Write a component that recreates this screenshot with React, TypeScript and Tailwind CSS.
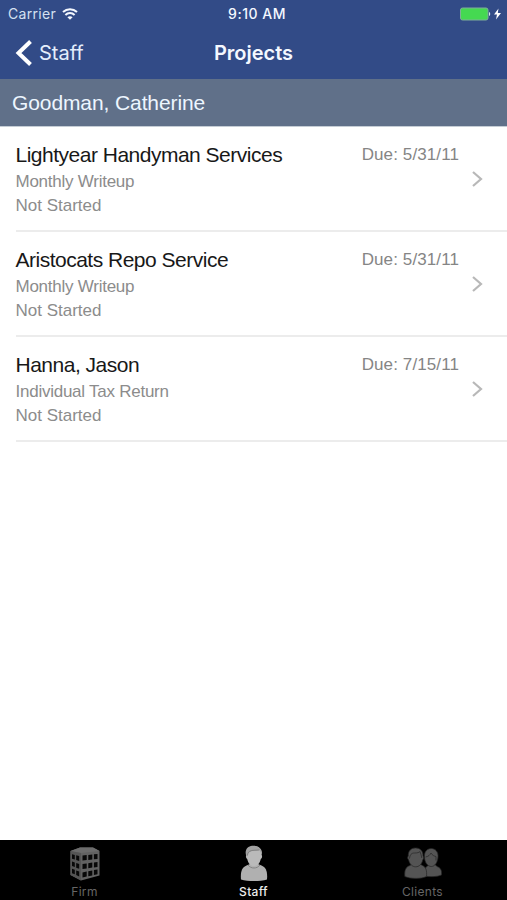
const projects = [
  { client: "Lightyear Handyman Services", task: "Monthly Writeup", status: "Not Started", due: "5/31/11" },
  { client: "Aristocats Repo Service", task: "Monthly Writeup", status: "Not Started", due: "5/31/11" },
  { client: "Hanna, Jason", task: "Individual Tax Return", status: "Not Started", due: "7/15/11" },
];

function WifiIcon() {
  return (
    <svg width="16" height="12" viewBox="0 0 16 12" fill="none" stroke="#f4f8ff" strokeWidth="2">
      <path d="M1 4C5 .2 11 .2 15 4" />
      <path d="M3.400 7c2.600-2.600 6.600-2.600 9.200 0" />
      <path d="M8 11.800 5.400 9.200c1.500-1.400 3.700-1.400 5.200 0z" fill="#f4f8ff" stroke="none" />
    </svg>
  );
}

function BatteryIcon() {
  return (
    <svg width="42" height="14" viewBox="0 0 42 14">
      <rect x="0.500" y="1" width="27.500" height="12" rx="2" fill="#45d951" stroke="#7fae9b" strokeWidth="1" />
      <path d="M29 5c1.600.4 1.600 3.600 0 4z" fill="#dbe8f0" />
      <path d="M38.500 1.500 34 7.500h3L36 12.500l5-6.500h-3.200z" fill="#fff" />
    </svg>
  );
}

function FirmIcon() {
  return (
    <svg width="32" height="36" viewBox="0 0 32 36">
      <path d="M1.500 5 11 1.500h13L30.500 5v24.500L12 34.500 1.500 29z" fill="#626262" />
      <path d="M1.500 5 11 1.500h13L30.500 5 12 7z" fill="#6c6c6c" />
      <path d="M1.500 5 12 7v27.500L1.500 29z" fill="#555" />
      <g fill="#080808">
        <path d="m13.500 9.600 4.200-.5v5l-4.200.5zM19.300 9l4-.5v5l-4 .5zM24.900 8.300l3.600-.4v5l-3.600.4z" />
        <path d="m13.500 18 4.200-.6v5l-4.200.6zM19.300 17.200l4-.6v5l-4 .6zM24.900 16.400l3.600-.5v5l-3.600.5z" />
        <path d="m13.500 26.400 4.200-.8v5l-4.200.9zM19.300 25.200l4-.8v5l-4 .8zM24.900 24.100l3.600-.7v4.900l-3.600.7z" />
        <path d="m3 8.200 2.800.8v4.600L3 12.800zM7.200 9.300l3 .8v4.800l-3-.9zM3 15.500l2.800.9V21L3 20.100zM7.200 17l3 .9v4.800l-3-1zM3 22.800l2.800 1v4.400L3 27.200zM7.200 24.600l3 1v4.800l-3-1.300z" />
      </g>
    </svg>
  );
}

function StaffIcon() {
  return (
    <svg width="28" height="37" viewBox="0 0 28 37">
      <path d="M1 34.500C.3 26.500 2 22.500 6.500 20.500L10 19h8l3.500 1.500C26 22.500 27.700 26.500 27 34.500c-7 2-19 2-26 0z" fill="#b0b0b0" />
      <path d="M8 20c3 4 9 4 12 0" fill="none" stroke="#858585" />
      <path d="M6.700 9C6.500 4 9 1 14 1s7.500 3.500 7.300 8.500c1.200 1 1 3.500-.5 4.500-1 4.500-3.500 7-6.800 7s-5.800-2.500-6.800-7c-1.500-1-1.700-3.800-.5-5z" fill="#bababa" />
      <path d="M6.400 11.500C4 5 7.500.7 13.500.7S23.500 5 21.600 11c-.3-2.500-.8-4.500-2.300-6-3 1-7 .2-9.500 2-1.500 1-2.200 2-2.600 4.500z" fill="#a2a2a2" />
      <path d="M7.400 10.500c.6-6 5.500-5 11.900-5.500" fill="none" stroke="#7c7c7c" strokeWidth="0.900" />
    </svg>
  );
}

function ClientsIcon() {
  return (
    <svg width="38" height="33" viewBox="0 0 38 33" fill="#545454" stroke="#252525" strokeWidth="0.700">
      <path d="M20 29c0-5 0-8 3-9.500l2-2h6l2 2c4 1.500 5 4 4.500 8.500-4 2-12 2-17.500 1z" />
      <path d="M20.500 10c-.5-5 2.500-8.500 6.700-8.500S34.500 5 34 10c-.3 5-3 9.500-6.700 9.500S20.500 15 20.500 10z" />
      <path d="M21.500 10c3-.5 4.500-2 5.500-4 1.500 2.500 3 3 5 3.500v4" fill="none" />
      <path d="M.8 29.500C.3 22.500 2 20 6 18.500l2-1.500h8l2.500 1.500c3.500 1.500 4.500 5 4 11-5 2.500-16 2.500-21.700 0z" />
      <path d="M4.300 9C4 4 7 .9 11.500.9S19.300 4 19 9c1 1 .8 3-.3 4-.8 4-3.500 6.800-7 6.800S5.500 17 4.700 13c-1.200-1-1.500-3-.4-4z" />
      <path d="M5.500 11.500c.5-4 2-5.500 5-5.500 3 0 4.500-.5 5.500-1.500.8 2.500 1.500 4 1.800 6.500" fill="none" />
    </svg>
  );
}

const tabs = [
  { label: "Firm", icon: FirmIcon, active: false },
  { label: "Staff", icon: StaffIcon, active: true },
  { label: "Clients", icon: ClientsIcon, active: false },
];

export default function App() {
  return (
    <div className="flex h-[900px] w-[507px] flex-col overflow-hidden bg-white font-['Liberation_Sans',Arial,sans-serif]">
      <header className="h-[79px] bg-[#324b87] font-[Inter,sans-serif] text-[#f4f8ff]">
        {/* Status bar */}
        <div className="grid h-[27px] grid-cols-3 items-center pl-2 pr-[5px] text-[14px]">
          <div className="flex items-center gap-[6px]">
            <span className="tracking-[0.300px] text-[#d5e0f1]">Carrier</span>
            <WifiIcon />
          </div>
          <span className="pl-[4px] text-center font-medium tracking-[0.500px]">9:10 AM</span>
          <div className="flex justify-end">
            <BatteryIcon />
          </div>
        </div>
        {/* Navigation bar */}
        <div className="grid h-[51px] grid-cols-3 items-center px-[15px]">
          <div className="flex items-center gap-[7px]">
            <svg width="17" height="26" viewBox="0 0 17 26" fill="none" stroke="#fff" strokeWidth="4">
              <path d="M15.500 1.500 3.500 13l12 11.500" />
            </svg>
            <span className="text-[20px] text-[#e4eefc]">Staff</span>
          </div>
          <h1 className="text-center text-[20px] font-semibold">Projects</h1>
        </div>
      </header>

      <h2 className="flex h-[48px] shrink-0 items-center border-b border-[#c5cdd5] bg-[#607089] pl-3 text-[21px] tracking-[-0.100px] text-[#edf6ff]">
        Goodman, Catherine
      </h2>

      <main className="flex-1">
        {projects.map((project) => (
          <div key={project.client} className="ml-4 flex h-[105px] border-b-2 border-[#ececec]">
            <div className="-ml-[0.500px] flex-1 pt-[14px]">
              <h3 className="text-[21px] leading-[27px] tracking-[-0.500px] text-[#181818]">{project.client}</h3>
              <p className="pt-[2px] text-[17px] leading-[24px] tracking-[-0.250px] text-[#8c8c8c]">{project.task}</p>
              <p className="text-[17px] leading-[24px] text-[#8c8c8c]">{project.status}</p>
            </div>
            <span className="pt-[16px] text-[17px] leading-[24px] tracking-[0.100px] text-[#858585]">Due: {project.due}</span>
            <svg className="ml-[12px] mr-[22px] mt-[43px]" width="14" height="18" viewBox="0 0 14 18" fill="none" stroke="#b8b8b8" strokeWidth="2.200">
              <path d="m2 2 8 7-8 7" />
            </svg>
          </div>
        ))}
      </main>

      <nav className="grid h-[60px] grid-cols-3 bg-black font-[Inter,sans-serif]">
        {tabs.map(({ label, icon: Icon, active }) => (
          <div key={label} className="flex flex-col items-center pt-[4px]">
            <div className="flex h-[39px] items-center">
              <Icon />
            </div>
            <span className={active ? "text-[12px] leading-[17px] font-medium tracking-[0.300px] text-[#ededed]" : "text-[12px] leading-[17px] tracking-[0.300px] text-[#666]"}>
              {label}
            </span>
          </div>
        ))}
      </nav>
    </div>
  );
}
